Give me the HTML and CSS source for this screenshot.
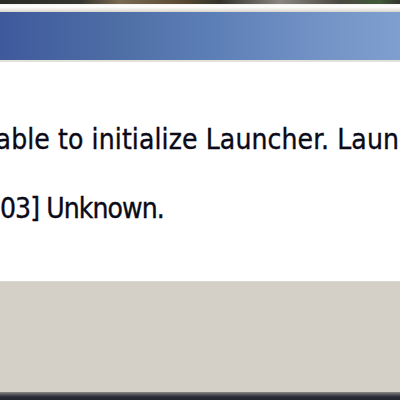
FILE: index.html
```html
<!DOCTYPE html>
<html>
<head>
<meta charset="utf-8">
<link rel="stylesheet" href="styles.css">
</head>
<body>
<div class="screen">
  <div class="photo"></div>
  <div class="frame"></div>
  <div class="titlebar"></div>
  <div class="sep"></div>
  <div class="content">
    <p class="line line1">Unable to initialize Launcher. Launcher failed.</p>
    <p class="line line2">Error [103] Unknown.</p>
  </div>
  <div class="footer"></div>
  <div class="taskbar"></div>
</div>
</body>
</html>
```

FILE: styles.css
```css
html, body {
  margin: 0;
  padding: 0;
  background: #ffffff;
}
.screen {
  width: 400px;
  height: 400px;
  overflow: hidden;
  display: flex;
  flex-direction: column;
}
.photo {
  height: 4px;
  background: linear-gradient(90deg, #2a2b26 0%, #34352f 20%, #7a6a52 30%, #5b4a34 45%, #33332b 55%, #8a8580 70%, #4a4842 85%, #3f5a36 95%, #33332f 100%);
}
.frame {
  height: 8px;
  background: linear-gradient(180deg, #f4f3ef 0%, #ffffff 35%, #e6e3dc 80%, #d8d4cb 100%);
}
.titlebar {
  height: 48px;
  background: linear-gradient(90deg, #3f5a9c 0%, #4e6ea6 30%, #5e80b8 55%, #7393c6 80%, #7f9fcf 100%);
}
.sep {
  height: 2px;
  background: #e4e1da;
}
.content {
  height: 219px;
  background: #ffffff;
  overflow: hidden;
  font-family: "DejaVu Sans Condensed", "DejaVu Sans", sans-serif;
  font-stretch: condensed;
  font-size: 28px;
  color: #0a0a18;
  -webkit-text-stroke: 0.35px #0a0a18;
}
.line {
  margin: 0;
  white-space: nowrap;
  line-height: 32px;
}
.line1 {
  margin-top: 62px;
  margin-left: -39px;
  letter-spacing: 0.1px;
}
.line2 {
  margin-top: 37px;
  margin-left: -88px;
  letter-spacing: -0.9px;
}
.footer {
  height: 111px;
  background: #d4d0c8;
  border-top: 1px solid #dcd9d2;
  box-sizing: border-box;
}
.taskbar {
  height: 8px;
  background: linear-gradient(180deg, #8a8884 0%, #55555a 30%, #2b2b36 60%, #24242e 100%);
}
```
